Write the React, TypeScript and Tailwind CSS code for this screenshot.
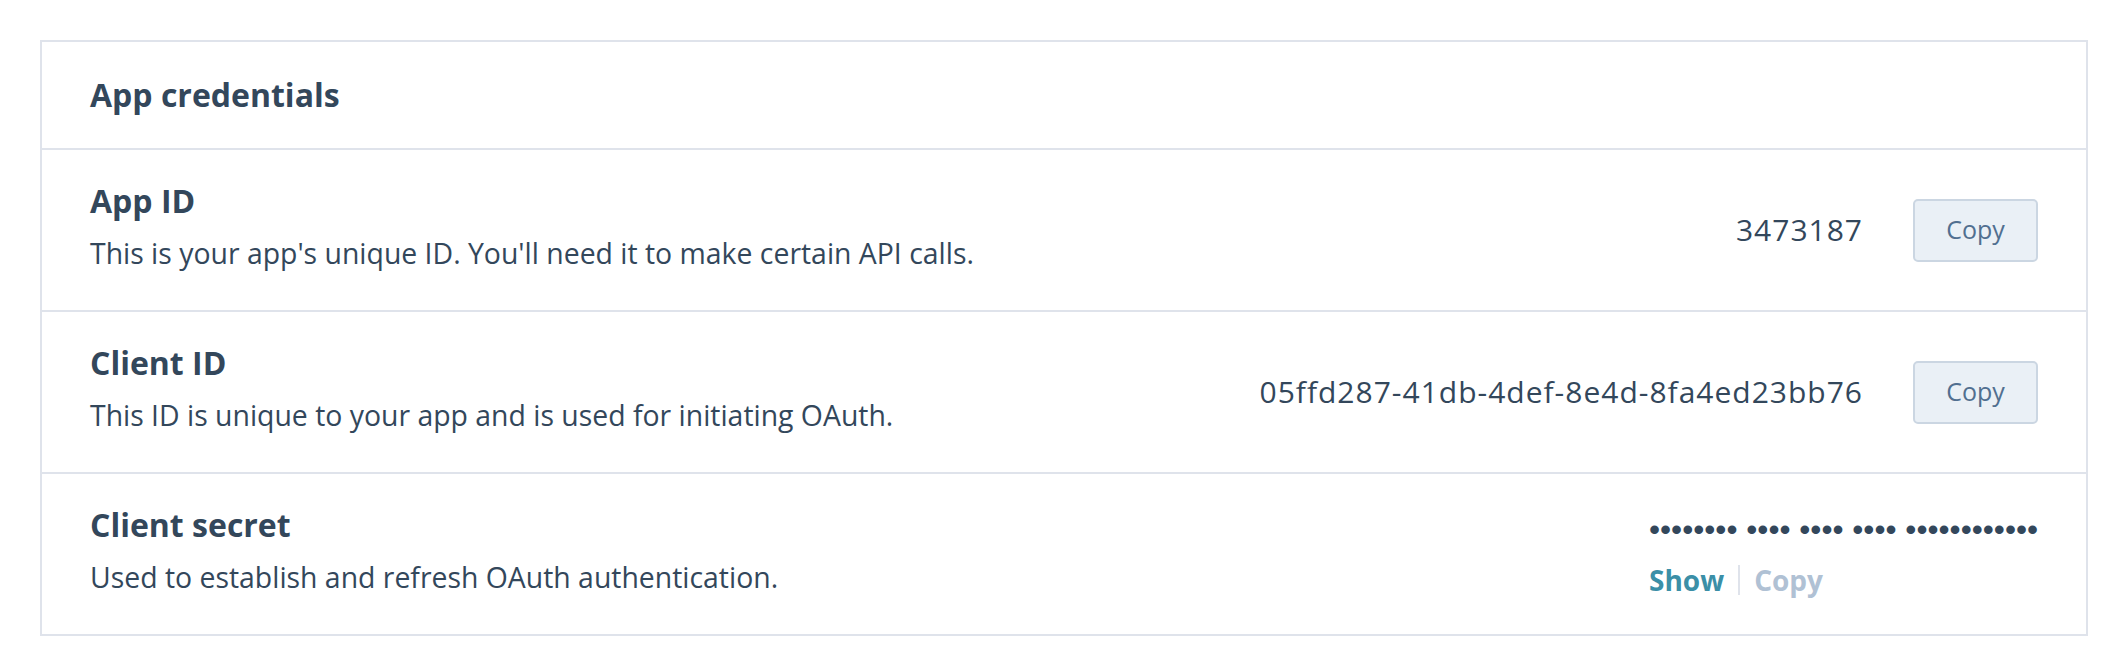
import React from 'react';

const font = { fontFamily: '"Open Sans", Lato, sans-serif' };

type Row = {
  title: string;
  desc: string;
  value?: string;
  secret?: boolean;
};

const rows: Row[] = [
  {
    title: 'App ID',
    desc: "This is your app's unique ID. You'll need it to make certain API calls.",
    value: '3473187',
  },
  {
    title: 'Client ID',
    desc: 'This ID is unique to your app and is used for initiating OAuth.',
    value: '05ffd287-41db-4def-8e4d-8fa4ed23bb76',
  },
  {
    title: 'Client secret',
    desc: 'Used to establish and refresh OAuth authentication.',
    secret: true,
  },
];

const CopyButton = () => (
  <button className="h-[63px] w-[125px] rounded-[5px] border-2 border-[#cbd6e2] bg-[#eaf0f6] text-[25px] text-[#516f90]">
    Copy
  </button>
);

const SecretValue = () => (
  <div className="flex w-[389px] flex-col">
    <div className="font-['Liberation_Sans',Arial,sans-serif] text-[31.6px] leading-[36px] whitespace-pre text-[#33475b]">
      {'•••••••• •••• •••• •••• ••••••••••••'}
    </div>
    <div className="mt-[15px] flex items-center text-[28px] font-bold leading-[36px]">
      <span className="text-[#3b8fa7]">Show</span>
      <span className="mx-[14px] h-[30px] w-[2px] bg-[#dfe3eb]" />
      <span className="text-[#b0c1d4]">Copy</span>
    </div>
  </div>
);

export default function App() {
  return (
    <div className="min-h-[660px] bg-white pl-10 pr-[30px] pt-10 text-[#33475b]" style={font}>
      <div className="border-2 border-[#dfe3eb]">
        <div className="flex h-[106px] items-center px-12">
          <h2 className="text-[32px] font-bold leading-none">App credentials</h2>
        </div>
        {rows.map((row) => (
          <div
            key={row.title}
            className="flex h-[162px] items-center justify-between border-t-2 border-[#dfe3eb] px-12"
          >
            <div className="flex flex-col pb-[6px]">
              <h3 className="text-[32px] font-bold leading-[36px]">{row.title}</h3>
              <p className="mt-[16px] text-[28.4px] leading-[36px]">{row.desc}</p>
            </div>
            {row.secret ? (
              <SecretValue />
            ) : (
              <div className="flex items-center gap-[50px]">
                <span className="text-[30px] leading-[36px] tracking-[1px]">{row.value}</span>
                <CopyButton />
              </div>
            )}
          </div>
        ))}
      </div>
    </div>
  );
}
